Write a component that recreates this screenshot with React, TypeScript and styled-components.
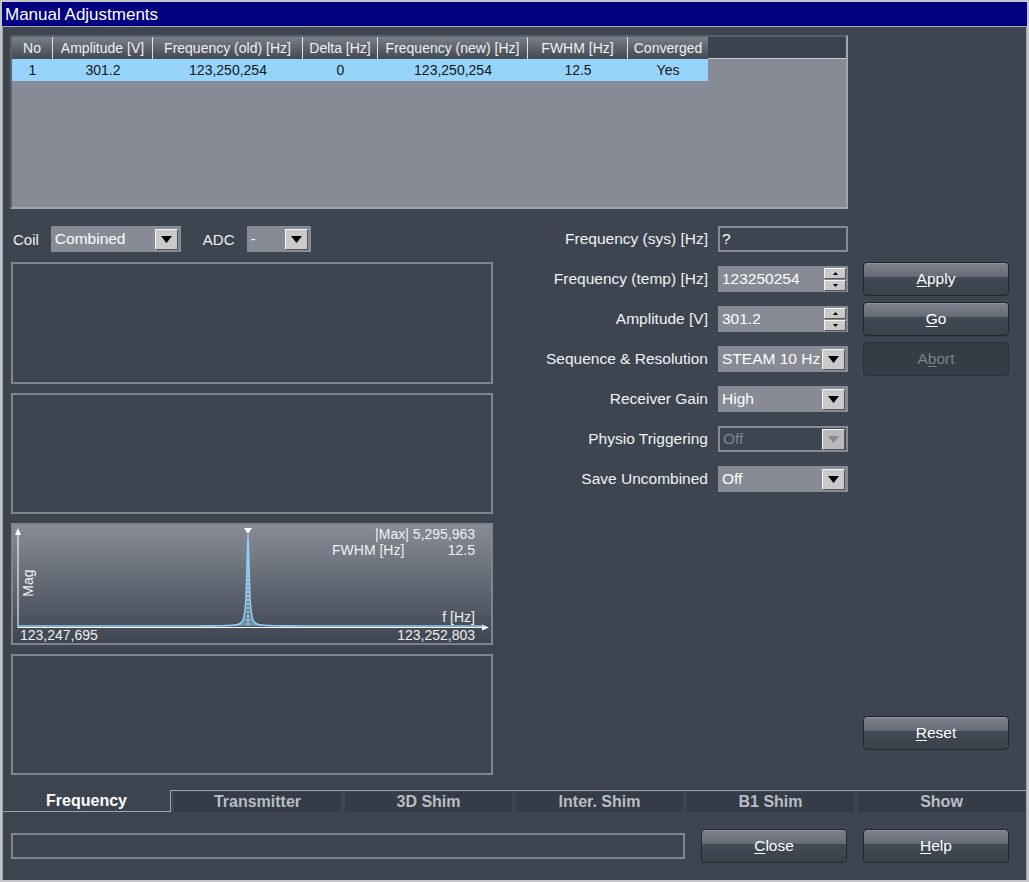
import React from 'react';
import styled, { createGlobalStyle } from 'styled-components';

const GlobalStyle = createGlobalStyle`
  html, body { margin: 0; padding: 0; background: #3c4550; }
  body { font-family: "Liberation Sans", Arial, sans-serif; }
  #root { width: 1029px; height: 882px; }
`;

const Window = styled.div`
  box-sizing: border-box;
  width: 1029px;
  height: 882px;
  border: 2px solid #c3c5c8;
  background: #3c4550;
  display: flex;
  flex-direction: column;
  font-family: "Liberation Sans", Arial, sans-serif;
  color: #f2f2f2;
`;

const TitleBar = styled.div`
  flex: none;
  height: 24px;
  line-height: 25px;
  padding-left: 3px;
  background: #000080;
  color: #ffffff;
  font-size: 17px;
  border-bottom: 1px solid #a7a9ad;
`;

const Body = styled.div`
  flex: 1;
  display: flex;
  flex-direction: column;
  border-left: 1px solid #9da2aa;
  border-right: 1px solid #9da2aa;
`;

const Main = styled.div`
  box-sizing: border-box;
  height: 763px;
  padding: 8px 17px 15px 8px;
  display: flex;
  flex-direction: column;
  gap: 17px;
`;

/* ---------- table ---------- */
const TableFrame = styled.div`
  box-sizing: border-box;
  width: 838px;
  height: 174px;
  margin-left: -1px;
  border: 2px solid;
  border-color: #5b616b #a2a6ad #a2a6ad #5b616b;
  background: #878b95;
  display: grid;
  grid-template-columns: 41px 100px 150px 75px 150px 100px 80px 1fr;
  grid-template-rows: 22px 22px;
  align-content: start;
  font-size: 14px;
`;

const HeaderCell = styled.div<{ $last?: boolean }>`
  box-sizing: border-box;
  background: linear-gradient(to bottom, #7a7f89, #424953);
  border-right: ${(p) => (p.$last ? 'none' : '1px solid #dfe2e6')};
  color: #eef0f2;
  text-align: center;
  line-height: 22px;
  white-space: nowrap;
  overflow: hidden;
`;

const HeaderFill = styled.div`
  box-sizing: border-box;
  background: #3a434e;
  border-bottom: 1px solid #c9ccd1;
`;

const DataCell = styled.div`
  background: #96d4fb;
  color: #151515;
  text-align: center;
  line-height: 22px;
`;

/* ---------- middle ---------- */
const Middle = styled.div`
  flex: 1;
  display: grid;
  grid-template-columns: 482px 1fr 146px;
  column-gap: 15px;
`;

const LeftCol = styled.div`
  display: flex;
  flex-direction: column;
  gap: 9px;
`;

const CoilRow = styled.div`
  flex: none;
  height: 26px;
  display: flex;
  align-items: center;
  font-size: 15px;
  margin-bottom: 1px;
`;

const InlineLabel = styled.span<{ $ml: number }>`
  margin-left: ${(p) => p.$ml}px;
  margin-right: 12px;
`;

const Panel = styled.div`
  flex: 1;
  box-sizing: border-box;
  border: 2px solid #7f848d;
`;

const ChartPanel = styled(Panel)`
  background: linear-gradient(to bottom, #888c96, #3d4550);
  overflow: hidden;
`;

const SelectBox = styled.div<{ $w: number; $disabled?: boolean }>`
  box-sizing: border-box;
  width: ${(p) => p.$w}px;
  height: 26px;
  display: flex;
  align-items: center;
  justify-content: space-between;
  padding: ${(p) => (p.$disabled ? '1px 1px 1px 3px' : '3px 3px 3px 4px')};
  background: ${(p) => (p.$disabled ? 'transparent' : '#868b95')};
  border: ${(p) => (p.$disabled ? '2px solid #868b95' : 'none')};
  color: ${(p) => (p.$disabled ? '#7f848b' : '#ffffff')};
  font-size: 15.5px;
  overflow: hidden;
  white-space: nowrap;
`;

const SelectText = styled.span`
  overflow: hidden;
  flex: 1;
`;

const ArrowBtn = styled.div<{ $disabled?: boolean }>`
  flex: none;
  box-sizing: border-box;
  width: 23px;
  height: 21px;
  background: ${(p) => (p.$disabled ? '#b9b9b9' : '#cacaca')};
  border: 1px solid;
  border-color: #f4f4f4 #555 #555 #f4f4f4;
  display: flex;
  align-items: center;
  justify-content: center;
`;

const Form = styled.div`
  display: grid;
  grid-template-columns: 1fr 130px;
  column-gap: 10px;
  row-gap: 14px;
  grid-auto-rows: 26px;
  align-content: start;
`;

const FormLabel = styled.div`
  text-align: right;
  font-size: 15.5px;
  line-height: 26px;
  white-space: nowrap;
  color: #f2f2f2;
`;

const TextField = styled.div<{ $outlined?: boolean }>`
  box-sizing: border-box;
  height: 26px;
  display: flex;
  align-items: center;
  justify-content: space-between;
  padding: ${(p) => (p.$outlined ? '0 0 0 2px' : '0 2px 0 4px')};
  background: ${(p) => (p.$outlined ? 'transparent' : '#868b95')};
  border: ${(p) => (p.$outlined ? '2px solid #868b95' : 'none')};
  color: #ffffff;
  font-size: 15.5px;
`;

const SpinCol = styled.div`
  display: flex;
  flex-direction: column;
  gap: 1px;
`;

const SpinBtn = styled.div`
  box-sizing: border-box;
  width: 22px;
  height: 11px;
  background: #cacaca;
  border: 1px solid;
  border-color: #f4f4f4 #555 #555 #f4f4f4;
  display: flex;
  align-items: center;
  justify-content: center;
`;

const ButtonCol = styled.div`
  display: flex;
  flex-direction: column;
  gap: 6px;
  padding-top: 36px;
  padding-bottom: 25px;
`;

const Btn = styled.div<{ $disabled?: boolean; $push?: boolean }>`
  box-sizing: border-box;
  width: 146px;
  height: 34px;
  flex: none;
  margin-top: ${(p) => (p.$push ? 'auto' : '0')};
  border-radius: 4px;
  border: 1px solid ${(p) => (p.$disabled ? '#2a3038' : '#22272e')};
  display: flex;
  align-items: center;
  justify-content: center;
  font-size: 15.5px;
  color: ${(p) => (p.$disabled ? '#7c8289' : '#ffffff')};
  background: ${(p) =>
    p.$disabled
      ? '#343c46'
      : 'linear-gradient(to bottom, #7d828c 0%, #676c76 42%, #434b56 43%, #38404a 100%)'};
  box-shadow: ${(p) => (p.$disabled ? 'none' : 'inset 0 1px 0 #8e939c')};
  & u { text-underline-offset: 2px; }
`;

/* ---------- tabs ---------- */
const TabRow = styled.div`
  flex: none;
  height: 22px;
  display: flex;
`;

const Tab = styled.div<{ $active?: boolean }>`
  flex: 1;
  box-sizing: border-box;
  display: flex;
  align-items: center;
  justify-content: center;
  font-size: 16px;
  font-weight: bold;
  ${(p) =>
    p.$active
      ? `color: #ffffff;
         border-right: 1px solid #9da2aa;
         border-bottom: 1px solid #9da2aa;`
      : `color: #b9bdc3;
         border-top: 1px solid #9da2aa;
         padding: 1px 1px 0 3px;
         background: #343c47;
         background-clip: content-box;`}
`;

/* ---------- footer ---------- */
const Footer = styled.div`
  flex: 1;
  display: grid;
  grid-template-columns: 1fr 146px 146px;
  column-gap: 16px;
  align-items: start;
  padding: 17px 17px 0 8px;
`;

const StatusBox = styled.div`
  box-sizing: border-box;
  height: 26px;
  margin-top: 4px;
  border: 2px solid #7f848d;
`;

const DownArrow = ({ color = '#000' }: { color?: string }) => (
  <svg width="11" height="7" viewBox="0 0 11 7">
    <polygon points="0,0 11,0 5.5,7" fill={color} />
  </svg>
);

const SpinArrow = ({ up }: { up?: boolean }) => (
  <svg width="5" height="3" viewBox="0 0 5 3">
    <polygon points={up ? '0,3 5,3 2.5,0' : '0,0 5,0 2.5,3'} fill="#000" />
  </svg>
);

const Select = ({ w, value, disabled }: { w: number; value: string; disabled?: boolean }) => (
  <SelectBox $w={w} $disabled={disabled}>
    <SelectText>{value}</SelectText>
    <ArrowBtn $disabled={disabled}>
      <DownArrow color={disabled ? '#8a8a8a' : '#000'} />
    </ArrowBtn>
  </SelectBox>
);

const SpinField = ({ value }: { value: string }) => (
  <TextField>
    <span>{value}</span>
    <SpinCol>
      <SpinBtn>
        <SpinArrow up />
      </SpinBtn>
      <SpinBtn>
        <SpinArrow />
      </SpinBtn>
    </SpinCol>
  </TextField>
);

function lorentz(g: number, amp: number): { line: string; fill: string } {
  const cx = 235;
  const base = 101;
  const pts: string[] = [];
  const xs: number[] = [];
  for (let x = 5; x <= 472; x += x > 200 && x < 270 ? 0.25 : 2) xs.push(x);
  xs.forEach((x, i) => {
    const d = x - cx;
    const y = base - (amp * g * g) / (d * d + g * g);
    pts.push(`${i === 0 ? 'M' : 'L'}${x.toFixed(2)},${y.toFixed(2)}`);
  });
  const line = pts.join(' ');
  const fill = `${line} L472,${base} L5,${base} Z`;
  return { line, fill };
}

const Chart = () => {
  const main = lorentz(1.4, 88);
  const glow = lorentz(6, 10);
  const txt = { fill: '#eef0f2', fontSize: 14, fontFamily: '"Liberation Sans", Arial, sans-serif' };
  return (
    <svg width="478" height="118" style={{ display: 'block' }}>
      <path d={glow.fill} fill="#9ad6ff" opacity="0.22" />
      <path d={main.fill} fill="#9ad6ff" opacity="0.35" />
      <line x1="235" y1="10" x2="235" y2="103" stroke="#ffffff" strokeWidth="1" strokeDasharray="2 2" />
      <line x1="5" y1="102.5" x2="5" y2="8" stroke="#ffffff" strokeWidth="1" />
      <polygon points="5,3 2,10 8,10" fill="#ffffff" />
      <line x1="5" y1="102.5" x2="470" y2="102.5" stroke="#ffffff" strokeWidth="1" />
      <polygon points="476,102.5 469,99.5 469,105.5" fill="#ffffff" />
      <path d={main.line} fill="none" stroke="#8fd0f8" strokeWidth="1.6" />
      <polygon points="231,3 239,3 235,9" fill="#ffffff" />
      <text x="462" y="14" textAnchor="end" {...txt}>|Max| 5,295,963</text>
      <text x="319" y="30" {...txt}>FWHM [Hz]</text>
      <text x="462" y="30" textAnchor="end" {...txt}>12.5</text>
      <text x="20" y="58" textAnchor="middle" transform="rotate(-90 20 58)" {...txt}>Mag</text>
      <text x="462" y="97" textAnchor="end" {...txt}>f [Hz]</text>
      <text x="7" y="114.5" {...txt}>123,247,695</text>
      <text x="462" y="114.5" textAnchor="end" {...txt}>123,252,803</text>
    </svg>
  );
};

const headers = ['No', 'Amplitude [V]', 'Frequency (old) [Hz]', 'Delta [Hz]', 'Frequency (new) [Hz]', 'FWHM [Hz]', 'Converged'];
const row = ['1', '301.2', '123,250,254', '0', '123,250,254', '12.5', 'Yes'];
const tabs = ['Frequency', 'Transmitter', '3D Shim', 'Inter. Shim', 'B1 Shim', 'Show'];

export default function App() {
  return (
    <>
      <GlobalStyle />
      <Window>
        <TitleBar>Manual Adjustments</TitleBar>
        <Body>
          <Main>
            <TableFrame>
              {headers.map((h, i) => (
                <HeaderCell key={h} $last={i === headers.length - 1}>{h}</HeaderCell>
              ))}
              <HeaderFill />
              {row.map((c, i) => (
                <DataCell key={i}>{c}</DataCell>
              ))}
              <div />
            </TableFrame>
            <Middle>
              <LeftCol>
                <CoilRow>
                  <InlineLabel $ml={2}>Coil</InlineLabel>
                  <Select w={130} value="Combined" />
                  <InlineLabel $ml={22}>ADC</InlineLabel>
                  <Select w={64} value="-" />
                </CoilRow>
                <Panel />
                <Panel />
                <ChartPanel>
                  <Chart />
                </ChartPanel>
                <Panel />
              </LeftCol>
              <Form>
                <FormLabel>Frequency (sys) [Hz]</FormLabel>
                <TextField $outlined>?</TextField>
                <FormLabel>Frequency (temp) [Hz]</FormLabel>
                <SpinField value="123250254" />
                <FormLabel>Amplitude [V]</FormLabel>
                <SpinField value="301.2" />
                <FormLabel>Sequence &amp; Resolution</FormLabel>
                <Select w={130} value="STEAM 10 Hz" />
                <FormLabel>Receiver Gain</FormLabel>
                <Select w={130} value="High" />
                <FormLabel>Physio Triggering</FormLabel>
                <Select w={130} value="Off" disabled />
                <FormLabel>Save Uncombined</FormLabel>
                <Select w={130} value="Off" />
              </Form>
              <ButtonCol>
                <Btn><u>A</u>pply</Btn>
                <Btn><u>G</u>o</Btn>
                <Btn $disabled>A<u>b</u>ort</Btn>
                <Btn $push><u>R</u>eset</Btn>
              </ButtonCol>
            </Middle>
          </Main>
          <TabRow>
            {tabs.map((t, i) => (
              <Tab key={t} $active={i === 0}>{t}</Tab>
            ))}
          </TabRow>
          <Footer>
            <StatusBox />
            <Btn><u>C</u>lose</Btn>
            <Btn><u>H</u>elp</Btn>
          </Footer>
        </Body>
      </Window>
    </>
  );
}
